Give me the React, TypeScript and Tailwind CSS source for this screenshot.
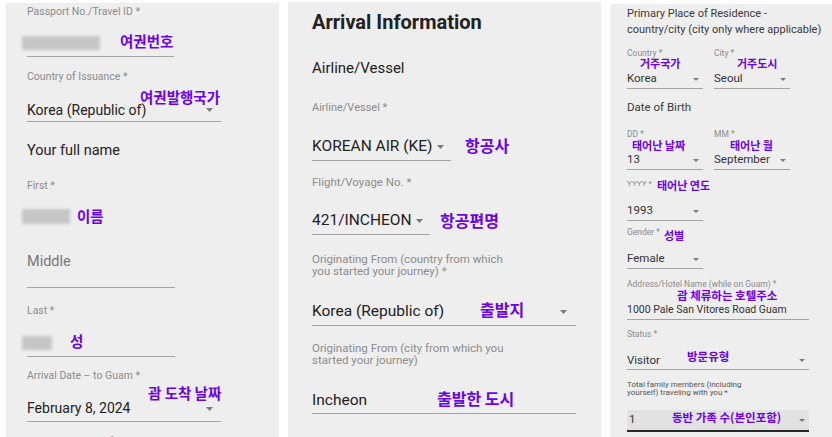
import type { ReactNode } from 'react';

const label = "text-[#8c8c8c] whitespace-nowrap";
const line = "border-b border-[#a3a3a3]";

function Note({ className, children }: { className: string; children: ReactNode }) {
    return (
        <span className={`absolute whitespace-nowrap font-['Noto_Sans_CJK_KR',sans-serif] font-bold text-[#6a00f4] ${className}`}>
            {children}
        </span>
    );
}

function Caret({ small }: { small?: boolean }) {
    return small ? (
        <svg width="6" height="3" viewBox="0 0 6 3" className="shrink-0">
            <polygon points="0,0 6,0 3,3" fill="#7a7a7a" />
        </svg>
    ) : (
        <svg width="7" height="4" viewBox="0 0 7 4" className="shrink-0">
            <polygon points="0,0 7,0 3.5,4" fill="#7a7a7a" />
        </svg>
    );
}

function Blur({ className }: { className: string }) {
    return <div className={`bg-[#c6c6c6] blur-[1.5px] ${className}`} />;
}

// passport + name panel
function LeftPanel() {
    return (
        <div className="ml-[6px] mt-[3px] h-[434px] w-[273px] shrink-0 overflow-hidden bg-[#eeeeee] pl-[21px] text-[#222]">
            <p className={`mt-[2px] text-[10.5px] leading-[14px] ${label}`}>Passport No./Travel ID *</p>
            <div className={`relative mt-[14px] flex h-[24px] w-[147px] items-center pb-[3px] ${line}`}>
                <Blur className="-ml-[5px] h-[14px] w-[78px]" />
                <Note className="left-[93px] top-[-2px] text-[14.5px] leading-[20px]">여권번호</Note>
            </div>

            <p className={`mt-[13px] text-[10.5px] leading-[14px] ${label}`}>Country of Issuance *</p>
            <div className={`relative mt-[14px] flex h-[24px] w-[194px] items-center justify-between pr-[8px] pt-[1px] ${line}`}>
                <span className="text-[14px]">Korea (Republic of)</span>
                <Caret />
                <Note className="left-[113px] top-[-11px] text-[14.5px] leading-[20px]">여권발행국가</Note>
            </div>

            <p className="mt-[20px] text-[14.5px] leading-[18px]">Your full name</p>

            <p className={`mt-[19px] text-[10.5px] leading-[14px] ${label}`}>First *</p>
            <div className="relative mt-[13px] flex h-[20px] items-center">
                <Blur className="-ml-[5px] h-[15px] w-[48px]" />
                <Note className="left-[50px] top-[0px] text-[14.5px] leading-[20px]">이름</Note>
            </div>

            <div className={`mt-[20px] h-[42px] w-[148px] pt-[3px] ${line}`}>
                <span className="text-[14.5px] leading-[18px] text-[#777]">Middle</span>
            </div>

            <p className={`mt-[16px] text-[10.5px] leading-[14px] ${label}`}>Last *</p>
            <div className={`relative mt-[15px] flex h-[24px] w-[148px] items-center pb-[3px] ${line}`}>
                <Blur className="-ml-[5px] h-[14px] w-[30px]" />
                <Note className="left-[43px] top-[-2px] text-[14.5px] leading-[20px]">성</Note>
            </div>

            <p className={`mt-[12px] text-[10.5px] leading-[14px] ${label}`}>Arrival Date – to Guam *</p>
            <div className={`relative mt-[13px] flex h-[26px] w-[194px] items-center justify-between pr-[8px] ${line}`}>
                <span className="text-[14px]">February 8, 2024</span>
                <Caret />
                <Note className="left-[121px] top-[-13px] text-[14.5px] leading-[20px]">괌 도착 날짜</Note>
            </div>

            <p className={`mt-[13px] text-[10.5px] leading-[14px] ${label}`}>Departure Date – from Guam *</p>
        </div>
    );
}

function MiddlePanel() {
    return (
        <div className="ml-[9px] mt-[2px] h-[435px] w-[313px] shrink-0 overflow-hidden bg-[#eeeeee] pl-[24px] text-[#222]">
            <h2 className="mt-[8px] text-[20px] font-bold leading-[24px]">Arrival Information</h2>
            <p className="mt-[25px] text-[15px] leading-[18px]">Airline/Vessel</p>

            <p className={`mt-[24px] text-[11px] leading-[14px] ${label}`}>Airline/Vessel *</p>
            <div className={`relative mt-[19px] flex h-[27px] w-[139px] items-center justify-between pr-[7px] ${line}`}>
                <span className="text-[15.5px]">KOREAN AIR (KE)</span>
                <Caret />
                <Note className="left-[153px] top-[-1px] text-[16px] leading-[24px]">항공사</Note>
            </div>

            <p className={`mt-[14px] text-[11.5px] leading-[14px] ${label}`}>Flight/Voyage No. *</p>
            <div className={`relative mt-[19px] flex h-[27px] w-[118px] items-center justify-between pr-[7px] ${line}`}>
                <span className="text-[15.5px]">421/INCHEON</span>
                <Caret />
                <Note className="left-[128px] top-[0px] text-[16px] leading-[24px]">항공편명</Note>
            </div>

            <p className="mt-[18px] text-[11.5px] leading-[12px] text-[#8c8c8c]">
                Originating From (country from which
                <br />
                you started your journey) *
            </p>
            <div className={`relative mt-[22px] flex h-[27px] w-[264px] items-center justify-between pr-[9px] ${line}`}>
                <span className="text-[15.5px]">Korea (Republic of)</span>
                <Caret />
                <Note className="left-[168px] top-[-2px] text-[16px] leading-[24px]">출발지</Note>
            </div>

            <p className="mt-[16px] text-[11.5px] leading-[12px] text-[#8c8c8c]">
                Originating From (city from which you
                <br />
                started your journey)
            </p>
            <div className={`relative mt-[21px] flex h-[27px] w-[264px] items-center pt-[1px] ${line}`}>
                <span className="text-[15.5px]">Incheon</span>
                <Note className="left-[125px] top-[-1px] text-[16px] leading-[24px]">출발한 도시</Note>
            </div>
        </div>
    );
}

function SmallSelect({ value, note, noteClass }: { value: string; note: string; noteClass: string }) {
    return (
        <div className={`relative mt-[10px] flex h-[21px] w-[76px] items-center justify-between pr-[4px] pt-[2px] ${line}`}>
            <span className="text-[11.5px]">{value}</span>
            <Caret small />
            <Note className={`text-[11px] leading-[16px] ${noteClass}`}>{note}</Note>
        </div>
    );
}

// residence / birth / stay panel
function RightPanel() {
    return (
        <div className="ml-[10px] mt-[4px] h-[433px] flex-1 overflow-hidden bg-[#eeeeee] pl-[16px] text-[#333]">
            <p className="mt-[2px] text-[11px] leading-[15.5px] text-[#3a3a3a]">
                Primary Place of Residence -
                <br />
                country/city (city only where applicable)
            </p>

            <div className="mt-[11px] flex gap-[11px]">
                <div>
                    <p className={`text-[8.5px] leading-[10px] ${label}`}>Country *</p>
                    <SmallSelect value="Korea" note="거주국가" noteClass="left-[13px] top-[-13px]" />
                </div>
                <div>
                    <p className={`text-[8.5px] leading-[10px] ${label}`}>City *</p>
                    <SmallSelect value="Seoul" note="거주도시" noteClass="left-[23px] top-[-13px]" />
                </div>
            </div>

            <p className="mt-[11px] text-[11.5px] leading-[15px] text-[#3a3a3a]">Date of Birth</p>

            <div className="mt-[14px] flex gap-[11px]">
                <div>
                    <p className={`text-[8.5px] leading-[10px] ${label}`}>DD *</p>
                    <SmallSelect value="13" note="태어난 날짜" noteClass="left-[5px] top-[-12px]" />
                </div>
                <div>
                    <p className={`text-[8.5px] leading-[10px] ${label}`}>MM *</p>
                    <SmallSelect value="September" note="태어난 월" noteClass="left-[16px] top-[-12px]" />
                </div>
            </div>

            <div className="relative mt-[9px]">
                <p className={`text-[8px] leading-[10px] ${label}`}>YYYY *</p>
                <Note className="left-[30px] top-[-2px] text-[11px] leading-[16px]">태어난 연도</Note>
            </div>
            <div className={`mt-[11px] flex h-[21px] w-[76px] items-center justify-between pr-[4px] pt-[2px] ${line}`}>
                <span className="text-[11.5px]">1993</span>
                <Caret small />
            </div>

            <div className="relative mt-[6px]">
                <p className={`text-[8.5px] leading-[10px] ${label}`}>Gender *</p>
                <Note className="left-[37px] top-[0px] text-[11px] leading-[16px]">성별</Note>
            </div>
            <div className={`mt-[11px] flex h-[21px] w-[76px] items-center justify-between pr-[4px] pt-[2px] ${line}`}>
                <span className="text-[11.5px]">Female</span>
                <Caret small />
            </div>

            <p className={`mt-[10px] text-[8.5px] leading-[10px] ${label}`}>Address/Hotel Name (while on Guam) *</p>
            <div className={`relative mt-[10px] flex h-[21px] w-[182px] items-center pt-[1px] ${line}`}>
                <span className="text-[10.5px]">1000 Pale San Vitores Road Guam</span>
                <Note className="left-[50px] top-[-12px] text-[11.5px] leading-[16px]">괌 체류하는 호텔주소</Note>
            </div>

            <p className={`mt-[9px] text-[8.5px] leading-[10px] ${label}`}>Status *</p>
            <div className={`relative mt-[10px] flex h-[21px] w-[182px] items-center justify-between pr-[4px] pt-[3px] ${line}`}>
                <span className="text-[11.5px]">Visitor</span>
                <Caret small />
                <Note className="left-[60px] top-[-1px] text-[11.5px] leading-[16px]">방문유형</Note>
            </div>

            <p className="mt-[11px] text-[8px] leading-[7.5px] text-[#555]">
                Total family members (including
                <br />
                yourself) traveling with you *
            </p>
            <div className="relative mt-[14px] flex h-[22px] w-[182px] items-center justify-between border-b-2 border-[#2a2a2a] bg-[#e2e2e2] pl-[2px] pr-[4px]">
                <span className="text-[11.5px]">1</span>
                <Caret small />
                <Note className="left-[45px] top-[-1px] text-[11.5px] leading-[16px]">동반 가족 수(본인포함)</Note>
            </div>
        </div>
    );
}

export default function App() {
    return (
        <div className="flex h-[437px] w-[832px] overflow-hidden bg-white font-['Roboto',sans-serif]">
            <LeftPanel />
            <MiddlePanel />
            <RightPanel />
        </div>
    );
}
